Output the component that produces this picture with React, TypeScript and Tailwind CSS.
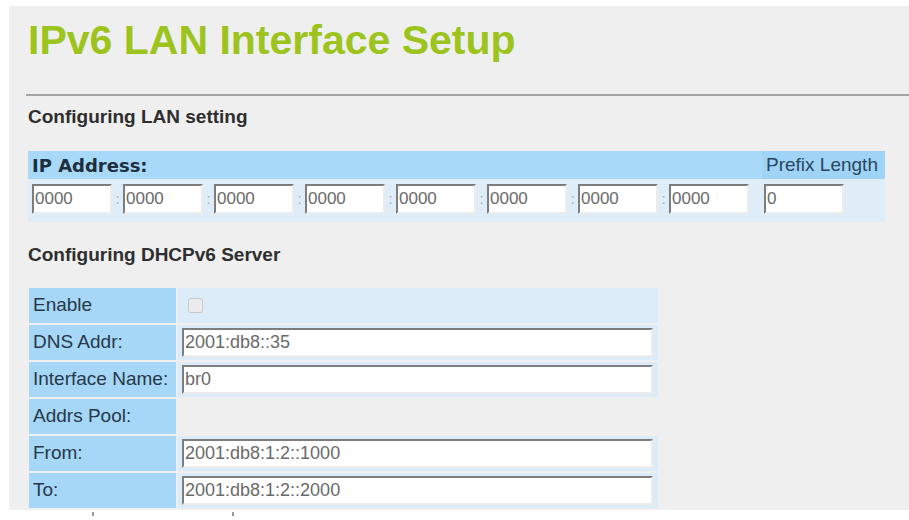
import React from "react"

const sans = "font-['Liberation_Sans',Arial,sans-serif]"

function IpBox({ value }: { value: string }) {
  return (
    <input
      readOnly
      value={value}
      className={`${sans} h-[30px] w-[80px] border-2 border-t-[#7d7d7d] border-l-[#7d7d7d] border-r-[#ececec] border-b-[#ececec] bg-white pl-[1px] text-[17px] text-[#6a6a6a] outline-none`}
    />
  )
}

function Colon() {
  return <span className={`${sans} w-[11px] text-center text-[15px] text-[#a8a8a8]`}>:</span>
}

function WideBox({ value }: { value: string }) {
  return (
    <input
      readOnly
      value={value}
      className={`${sans} h-[29px] w-[471px] border-2 border-t-[#7d7d7d] border-l-[#7d7d7d] border-r-[#ececec] border-b-[#ececec] bg-white pl-[1px] text-[18px] text-[#6a6a6a] outline-none`}
    />
  )
}

function Row({ label, children, plain }: { label: string; children?: React.ReactNode; plain?: boolean }) {
  return (
    <div className="flex h-[35px] gap-[2px]">
      <div className={`${sans} flex w-[147px] items-center bg-[#a6d7f6] pl-[4px] text-[19px] text-[#26384a]`}>
        {label}
      </div>
      <div className={`flex w-[480px] items-center pl-[4px] ${plain ? "" : "bg-[#dcebf8]"}`}>{children}</div>
    </div>
  )
}

export default function App() {
  const groups = ["0000", "0000", "0000", "0000", "0000", "0000", "0000", "0000"]

  return (
    <div className="h-[520px] w-[909px] overflow-hidden bg-white pl-[9px] pt-[6px]">
      <div className="bg-[#efefef] pb-[2px] pt-[11px]">
        {/* Title */}
        <h1 className={`${sans} pl-[19px] text-[41px] font-bold leading-[46px] text-[#9cc41c]`}>
          IPv6 LAN Interface Setup
        </h1>
        <div className="ml-[17px] mt-[31px] h-[2px] bg-[#a3a3a3]" />

        {/* LAN setting */}
        <h2 className={`${sans} mt-[10px] pl-[19px] text-[19px] font-bold leading-[22px] text-[#2e2e2e]`}>
          Configuring LAN setting
        </h2>

        <div className="ml-[19px] mt-[23px] w-[857px]">
          <div className="flex h-[28px]">
            <div className="flex w-[734px] items-center bg-[#a9d9f8] pl-[4px] font-['DejaVu_Sans',sans-serif] text-[18px] font-bold text-[#1d2e3e]">
              IP Address:
            </div>
            <div className={`${sans} flex w-[123px] items-center bg-[#9fd4f6] pl-[4px] text-[19px] text-[#2a4660]`}>
              Prefix Length
            </div>
          </div>
          <div className="flex h-[43px] items-start bg-[#dfedf8] pt-[5px]">
            <div className="flex w-[734px] items-center pl-[4px]">
              {groups.map((g, i) => (
                <React.Fragment key={i}>
                  {i > 0 && <Colon />}
                  <IpBox value={g} />
                </React.Fragment>
              ))}
            </div>
            <div className="pl-[2px]">
              <IpBox value="0" />
            </div>
          </div>
        </div>

        {/* DHCPv6 */}
        <h2 className={`${sans} mt-[22px] pl-[19px] text-[19px] font-bold leading-[22px] text-[#2e2e2e]`}>
          Configuring DHCPv6 Server
        </h2>

        <div className="ml-[20px] mt-[22px] flex flex-col gap-[2px]">
          <Row label="Enable">
            <span className="ml-[6px] h-[15px] w-[15px] rounded-[3px] border border-[#c9c9c9] bg-[#ebebeb]" />
          </Row>
          <Row label="DNS Addr:">
            <WideBox value="2001:db8::35" />
          </Row>
          <Row label="Interface Name:">
            <WideBox value="br0" />
          </Row>
          <Row label="Addrs Pool:" plain />
          <Row label="From:">
            <WideBox value="2001:db8:1:2::1000" />
          </Row>
          <Row label="To:">
            <WideBox value="2001:db8:1:2::2000" />
          </Row>
        </div>
      </div>

      <div className="flex gap-[138px] pl-[83px] pt-[2px]">
        <span className="h-[4px] w-[2px] bg-[#9a9a9a]" />
        <span className="h-[4px] w-[2px] bg-[#9a9a9a]" />
      </div>
    </div>
  )
}
